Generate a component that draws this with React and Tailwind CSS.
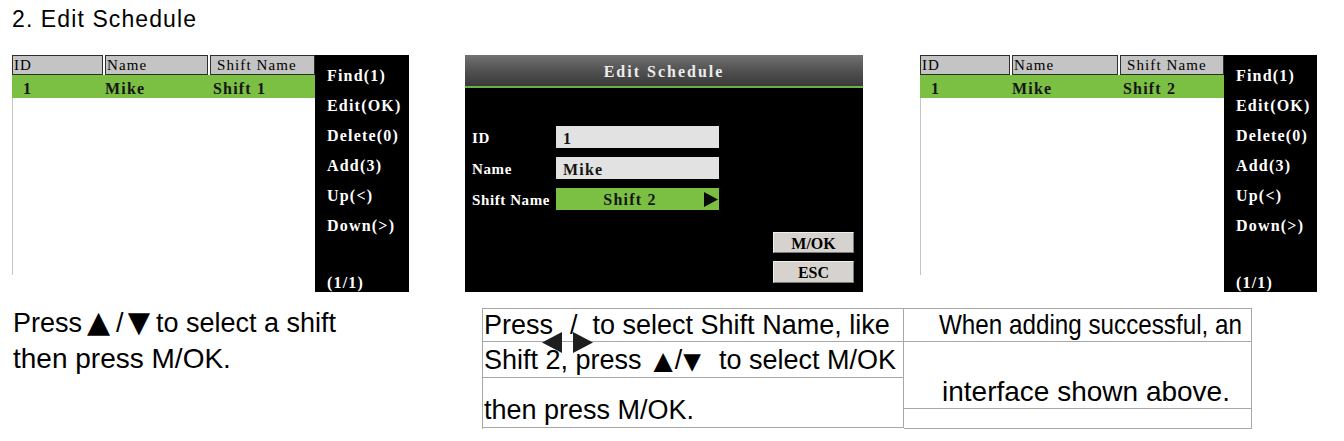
import React from 'react'

// 기기 화면 글꼴 (굵은 세리프)
const lcd = "font-['Liberation_Serif','Times_New_Roman',serif] text-[16px] tracking-[1.2px]"

function Sidebar({ width }) {
  const items = ['Find(1)', 'Edit(OK)', 'Delete(0)', 'Add(3)', 'Up(<)', 'Down(>)']
  return (
    <div className={`flex ${width} flex-col bg-black pl-[12px] pt-[6px] font-bold text-white`}>
      {items.map((it) => (
        <div key={it} className="h-[30px] leading-[30px]">
          {it}
        </div>
      ))}
      <div className="mt-auto leading-[18px]">(1/1)</div>
    </div>
  )
}

function ListScreen({ shift, cols, side }) {
  return (
    <div className={`flex h-[237px] w-[397px] ${lcd}`}>
      <div className="flex flex-1 flex-col bg-white">
        {/* 헤더 */}
        <div className="flex h-[20px] gap-[2px] text-[15px] tracking-[1.1px]">
          <div className={`${cols[0]} border border-[#2e2e2e] bg-[#c4c4c4] pl-[1px] leading-[19px] text-black`}>ID</div>
          <div className={`${cols[1]} border border-[#2e2e2e] bg-[#c4c4c4] pl-[1px] leading-[19px] text-black`}>Name</div>
          <div className={`${cols[2]} border border-[#2e2e2e] bg-[#c4c4c4] pl-[6px] leading-[19px] text-black`}>Shift Name</div>
        </div>
        {/* 선택된 행 */}
        <div className="flex h-[23px] gap-[2px] bg-[#7bbf43] font-bold leading-[28px] text-[#151515]">
          <div className={`${cols[0]} pl-[11px]`}>1</div>
          <div className={`${cols[1]} pl-0`}>Mike</div>
          <div className={`${cols[2]} pl-[3px]`}>{shift}</div>
        </div>
        <div className="mb-[17px] flex-1 border-l border-[#c4c4c4]" />
      </div>
      <Sidebar width={side} />
    </div>
  )
}

function Field({ label, children, green }) {
  return (
    <div className="flex h-[22px] items-center">
      <div className="w-[84px] pt-[2px] text-[15px] font-bold tracking-[0.6px] whitespace-nowrap text-white">{label}</div>
      {green ? (
        <div className="flex h-full w-[163px] items-center bg-[#7bbf43] font-bold text-[#151515]">
          <span className="flex-1 pt-[2px] text-center">{children}</span>
          <svg width="14" height="15" viewBox="0 0 14 15" className="mr-[1px]">
            <polygon points="0,0 14,7.5 0,15" fill="#0a0a0a" />
          </svg>
        </div>
      ) : (
        <div className="h-full w-[163px] bg-[#e2e2e2] pl-[7px] font-bold leading-[25px] text-[#151515]">{children}</div>
      )}
    </div>
  )
}

function EditScreen() {
  return (
    <div className={`flex h-[237px] w-[398px] flex-col bg-black ${lcd}`}>
      <div className="flex h-[33px] items-center justify-center border-b-2 border-[#6db33f] bg-gradient-to-b from-[#727272] via-[#525252] to-[#3a3a3a] pt-[2px] text-[16px] font-bold tracking-[2px] text-[#ececec]">
        Edit Schedule
      </div>
      <div className="mt-[38px] flex flex-col gap-[9px] pl-[7px]">
        <Field label="ID">1</Field>
        <Field label="Name">Mike</Field>
        <Field label="Shift Name" green>
          Shift 2
        </Field>
      </div>
      <div className="mt-auto mb-[9px] mr-[9px] flex flex-col items-end gap-[8px]">
        <div className="h-[21px] w-[81px] border border-b-[#7a7a7a] border-l-[#efefef] border-r-[#7a7a7a] border-t-[#efefef] bg-[#d6d3ce] text-center text-[16px] font-bold leading-[21px] tracking-normal text-black">
          M/OK
        </div>
        <div className="h-[22px] w-[81px] border border-b-[#7a7a7a] border-l-[#efefef] border-r-[#7a7a7a] border-t-[#efefef] bg-[#d6d3ce] text-center text-[16px] font-bold leading-[22px] tracking-normal text-black">
          ESC
        </div>
      </div>
    </div>
  )
}

function Tri({ children, className }) {
  return <span className={`font-['DejaVu_Sans',sans-serif] leading-none ${className}`}>{children}</span>
}

export default function App() {
  return (
    <div className="h-[441px] w-[1344px] overflow-hidden bg-white font-['Liberation_Sans',Arial,sans-serif] text-black">
      <h1 className="pl-[12px] pt-[8px] text-[23px] leading-[23px] tracking-[1.1px]">2. Edit Schedule</h1>

      {/* 화면 3개 */}
      <div className="mt-[24px] flex pl-[12px]">
        <ListScreen shift="Shift 1" cols={['w-[91px]', 'w-[103px]', 'w-[105px]']} side="w-[94px]" />
        <div className="ml-[56px]">
          <EditScreen />
        </div>
        <div className="ml-[57px]">
          <ListScreen shift="Shift 2" cols={['w-[90px]', 'w-[106px]', 'w-[104px]']} side="w-[93px]" />
        </div>
      </div>

      {/* 설명 */}
      <div className="flex items-start">
        <div className="mt-[14px] w-[482px] pl-[13px] text-[27px] leading-[35px]">
          <p>
            Press<Tri className="ml-[5px] mr-[6px] text-[30px]">▲</Tri>/<Tri className="ml-[4px] mr-[6px] text-[29px]">▼</Tri>to select a shift
          </p>
          <p className="text-[28px]">then press M/OK.</p>
        </div>

        <div className="relative mt-[16px] flex border-l border-t border-[#a8a8a8] text-[27px]">
          <div className="flex w-[421px] flex-col">
            <div className="h-[33px] border-b border-r border-[#a8a8a8] pl-[1px] leading-[33px] whitespace-nowrap">
              Press<span className="ml-[17px]">/</span>
              <span className="ml-[15px]">to select Shift Name, like</span>
            </div>
            <div className="h-[36px] border-b border-r border-[#a8a8a8] pl-[1px] pt-[1px] leading-[35px] whitespace-nowrap">
              Shift 2, press<Tri className="ml-[12px] text-[25px]">▲</Tri>
              <span className="ml-[2px]">/</span>
              <Tri className="ml-[1px] text-[23px]">▼</Tri>
              <span className="ml-[18px]">to select M/OK</span>
            </div>
            <div className="flex h-[50px] items-end border-b border-r border-[#a8a8a8] pl-[1px] leading-[33px]">
              then press M/OK.
            </div>
          </div>
          <div className="flex w-[348px] flex-col text-[28px]">
            <div className="h-[33px] border-b border-r border-[#a8a8a8] pl-[35px] leading-[32px] whitespace-nowrap">
              <span className="inline-block origin-left scale-x-[0.865]">When adding successful, an</span>
            </div>
            <div className="flex h-[67px] items-end border-b border-r border-[#a8a8a8] pl-[38px] leading-[32px]">
              interface shown above.
            </div>
            <div className="h-[20px] border-b border-r border-[#a8a8a8]" />
          </div>

          {/* 겹쳐 붙은 좌우 화살표 */}
          <svg width="20" height="21" viewBox="0 0 20 21" className="absolute left-[59px] top-[23px]">
            <polygon points="0,10.5 20,0 20,21" fill="#1e1e1e" />
          </svg>
          <svg width="20" height="21" viewBox="0 0 20 21" className="absolute left-[90px] top-[23px]">
            <polygon points="0,0 20,10.5 0,21" fill="#1e1e1e" />
          </svg>
        </div>
      </div>
    </div>
  )
}
